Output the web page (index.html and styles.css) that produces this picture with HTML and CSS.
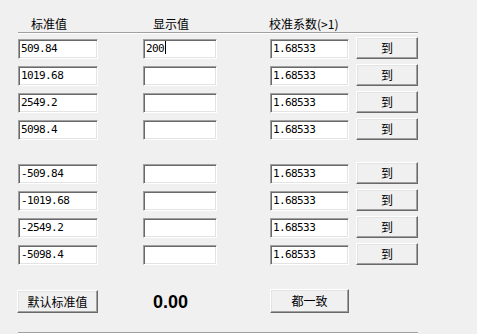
FILE: index.html
```html
<!DOCTYPE html>
<html>
<head>
<meta charset="utf-8">
<link rel="stylesheet" href="styles.css">
</head>
<body>
<div class="panel">
  <div class="grid head">
    <div class="h h1">标准值</div>
    <div class="h h2">显示值</div>
    <div class="h h3">校准系数(&gt;1)</div>
    <div></div>
  </div>
  <div class="sep"></div>
  <div class="group">
    <div class="grid row"><div class="field f1">509.84</div><div class="field f2">200<span class="caret"></span></div><div class="field f3">1.68533</div><div class="btn b4">到</div></div>
    <div class="grid row"><div class="field f1">1019.68</div><div class="field f2"></div><div class="field f3">1.68533</div><div class="btn b4">到</div></div>
    <div class="grid row"><div class="field f1">2549.2</div><div class="field f2"></div><div class="field f3">1.68533</div><div class="btn b4">到</div></div>
    <div class="grid row"><div class="field f1">5098.4</div><div class="field f2"></div><div class="field f3">1.68533</div><div class="btn b4">到</div></div>
  </div>
  <div class="group group2">
    <div class="grid row"><div class="field f1">-509.84</div><div class="field f2"></div><div class="field f3">1.68533</div><div class="btn b4">到</div></div>
    <div class="grid row"><div class="field f1">-1019.68</div><div class="field f2"></div><div class="field f3">1.68533</div><div class="btn b4">到</div></div>
    <div class="grid row"><div class="field f1">-2549.2</div><div class="field f2"></div><div class="field f3">1.68533</div><div class="btn b4">到</div></div>
    <div class="grid row"><div class="field f1">-5098.4</div><div class="field f2"></div><div class="field f3">1.68533</div><div class="btn b4">到</div></div>
  </div>
  <div class="grid bottom">
    <div class="btn bdef">默认标准值</div>
    <div class="value">0.00</div>
    <div class="btn ball">都一致</div>
    <div></div>
  </div>
  <div class="sep sep2"></div>
</div>
</body>
</html>
```
FILE: styles.css
```css
html, body {
  margin: 0;
  padding: 0;
  background: #f0f0f0;
  width: 477px;
  height: 334px;
  overflow: hidden;
  font-family: "Noto Sans CJK SC", "Liberation Sans", sans-serif;
  font-size: 12px;
  color: #000;
}
.panel {
  padding: 16px 0 0 18px;
}
.grid {
  display: grid;
  grid-template-columns: 125px 127px 86px 62px;
  align-items: center;
}
.head {
  height: 16px;
}
.h {
  line-height: 16px;
  font-size: 12px;
}
.h1 { padding-left: 13px; }
.h2 { padding-left: 10px; }
.h3 { padding-left: 0; margin-left: -1px; }
.sep {
  width: 400px;
  height: 1px;
  background: #a0a0a0;
  border-bottom: 1px solid #ffffff;
}
.group {
  margin-top: 5px;
  display: flex;
  flex-direction: column;
  gap: 7px;
}
.group2 {
  margin-top: 24px;
}
.row {
  height: 20px;
}
.field {
  box-sizing: border-box;
  height: 20px;
  background: #fff;
  border: 1px solid;
  border-color: #a0a0a0 #ffffff #ffffff #a0a0a0;
  box-shadow: inset 1px 1px 0 #696969, inset -1px -1px 0 #e3e3e3;
  font-family: "DejaVu Sans Mono", "Liberation Mono", monospace;
  font-size: 11px;
  letter-spacing: -0.6px;
  line-height: 18px;
  padding-left: 2px;
  white-space: nowrap;
  overflow: hidden;
}
.f1 { width: 80px; }
.f2 { width: 74px; }
.f3 { width: 79px; }
.caret {
  display: inline-block;
  width: 1px;
  height: 13px;
  background: #000;
  vertical-align: -2px;
  margin-left: 1px;
}
.btn {
  box-sizing: border-box;
  background: #f0f0f0;
  border: 1px solid;
  border-color: #ffffff #696969 #696969 #ffffff;
  box-shadow: inset -1px -1px 0 #a0a0a0, inset 1px 1px 0 #e3e3e3;
  display: flex;
  align-items: center;
  justify-content: center;
  font-size: 12px;
  line-height: 14px;
}
.b4 {
  width: 62px;
  height: 22px;
  align-self: start;
  margin-top: -2px;
  padding-bottom: 1px;
}
.bottom {
  margin-top: 24px;
  height: 24px;
}
.bdef {
  width: 81px;
  height: 23px;
  margin-left: -1px;
  margin-top: 1px;
}
.ball {
  width: 79px;
  height: 24px;
}
.value {
  font-family: "Liberation Sans", Arial, sans-serif;
  font-weight: bold;
  font-size: 18px;
  padding-left: 10px;
  line-height: 20px;
  margin-top: 2px;
}
.sep2 {
  margin-top: 19px;
}
```
